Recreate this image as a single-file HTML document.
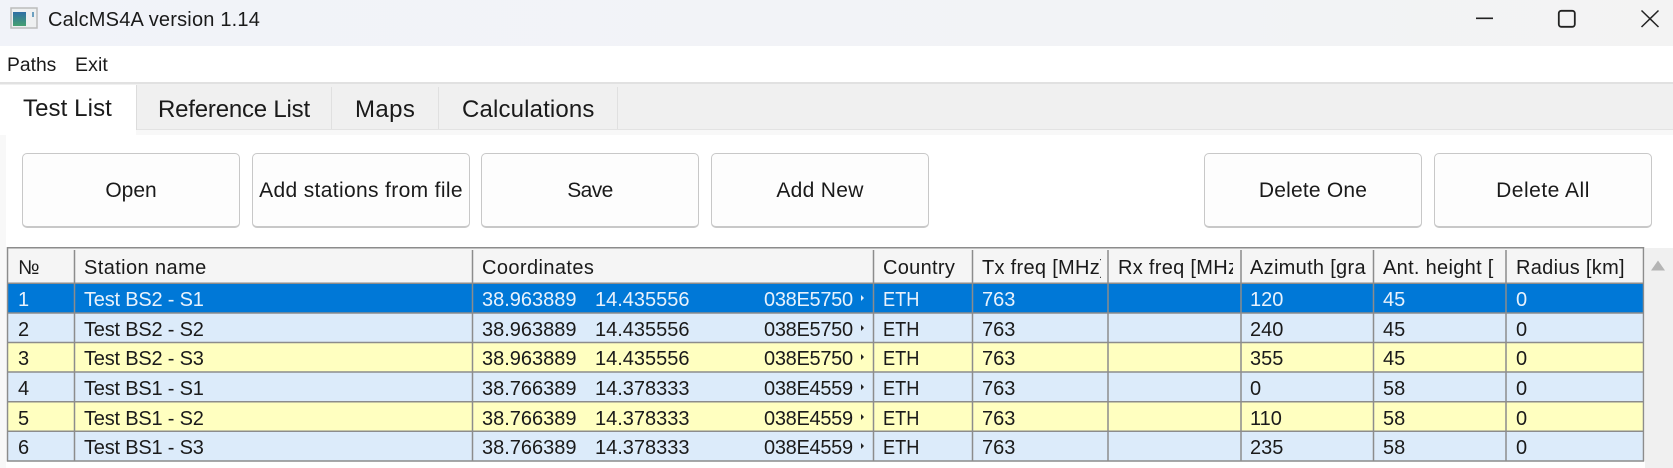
<!DOCTYPE html>
<html><head><meta charset="utf-8"><style>
html,body{margin:0;padding:0}
body{width:1673px;height:468px;overflow:hidden;background:#fff;position:relative;font-family:"Liberation Sans",sans-serif;color:#1a1a1a}
.a{position:absolute}
.t{position:absolute;white-space:nowrap;overflow:hidden;font-size:20px;line-height:32px;height:32px}
.h{letter-spacing:.4px}
.n{letter-spacing:-.2px}
.c{letter-spacing:-.3px}
.e{transform:scaleX(.91);transform-origin:0 0}
.btn{position:absolute;top:153px;height:72px;width:216px;border:1px solid #c8c8c8;border-bottom:2px solid #c8c8c8;border-radius:5px;background:#fdfdfd;text-align:center;font-size:21px;line-height:74px;white-space:nowrap;letter-spacing:.2px}
.w{color:#e8f2fc}
.r{position:absolute;left:861px;border-left:3.500px solid #222;border-top:3.500px solid transparent;border-bottom:3.500px solid transparent}
</style></head><body>
<div class="a" style="left:0;top:0;width:1673px;height:46px;background:linear-gradient(90deg,#f1f3f9,#f2f3f6 70%,#f3f3f3)"></div>
<svg class="a" style="left:10px;top:7px" width="28" height="23" viewBox="0 0 28 23">
<rect x="1" y="1" width="26" height="20" fill="#eef0f1" stroke="#bcbcbc" stroke-width="1.500"/>
<defs><linearGradient id="g" x1="0" y1="0" x2="0" y2="1"><stop offset="0" stop-color="#2f6fa5"/><stop offset="1" stop-color="#45a070"/></linearGradient></defs>
<rect x="3" y="5" width="13" height="14" fill="url(#g)"/><rect x="22" y="5" width="2" height="5" fill="#6ca0c0"/>
</svg>
<div class="a" style="left:48px;top:6px;font-size:20px;line-height:28px;white-space:nowrap;letter-spacing:.2px">CalcMS4A version 1.14</div>
<svg class="a" style="left:1460px;top:4px" width="213" height="36" viewBox="0 0 213 36" fill="none" stroke="#222">
<path d="M16 14.300H33" stroke-width="1.600"/>
<rect x="98.800" y="6.800" width="16" height="16" rx="2.500" stroke-width="1.800"/>
<path d="M181.500 6.500L198.500 23M198.500 6.500L181.500 23" stroke-width="1.500"/>
</svg>
<div class="a" style="left:7px;top:52px;font-size:19.300px;line-height:28px">Paths</div>
<div class="a" style="left:75px;top:51px;font-size:19.500px;line-height:28px;letter-spacing:.1px">Exit</div>
<div class="a" style="left:0;top:82px;width:1673px;height:2px;background:#e1e1e1"></div>
<div class="a" style="left:0;top:84px;width:1673px;height:45px;background:#f0f0f0"></div>
<div class="a" style="left:0;top:129px;width:1673px;height:1px;background:#e3e3e3"></div>
<div class="a" style="left:0;top:130px;width:1673px;height:5px;background:#f8f8f8"></div>
<div class="a" style="left:0;top:135px;width:6px;height:333px;background:#f8f8f8"></div>
<div class="a" style="left:0;top:85px;width:136px;height:50px;background:#fff"></div>
<div class="a" style="left:136px;top:85px;width:1px;height:45px;background:#dcdcdc"></div>
<div class="a" style="left:331px;top:87px;width:1px;height:42px;background:#e0e0e0"></div>
<div class="a" style="left:438px;top:87px;width:1px;height:42px;background:#e0e0e0"></div>
<div class="a" style="left:617px;top:87px;width:1px;height:42px;background:#e0e0e0"></div>
<div class="a" style="left:23px;top:93px;font-size:24px;line-height:32px;white-space:nowrap;letter-spacing:.1px">Test List</div>
<div class="a" style="left:158px;top:94px;font-size:24px;line-height:32px;white-space:nowrap;letter-spacing:-.2px">Reference List</div>
<div class="a" style="left:355px;top:94px;font-size:24px;line-height:32px;white-space:nowrap;letter-spacing:.4px">Maps</div>
<div class="a" style="left:462px;top:94px;font-size:24px;line-height:32px;white-space:nowrap;letter-spacing:.15px">Calculations</div>

<div class="btn" style="left:22px;letter-spacing:0">Open</div>
<div class="btn" style="left:252px;letter-spacing:.35px">Add stations from file</div>
<div class="btn" style="left:481px;letter-spacing:-.6px">Save</div>
<div class="btn" style="left:711px;letter-spacing:.3px">Add New</div>
<div class="btn" style="left:1204px">Delete One</div>
<div class="btn" style="left:1434px;letter-spacing:.5px">Delete All</div>

<div class="a" style="left:1645px;top:248px;width:28px;height:220px;background:#f0f0f0"></div>
<svg class="a" style="left:0;top:240px" width="1673" height="228" viewBox="0 240 1673 228">
<rect x="7" y="248" width="1637" height="35" fill="#f5f5f5"/>
<rect x="7" y="283" width="1637" height="30" fill="#0078d7"/>
<rect x="7" y="313" width="1637" height="29.500" fill="#dcebfa"/>
<rect x="7" y="342.500" width="1637" height="29.500" fill="#ffffc0"/>
<rect x="7" y="372" width="1637" height="29.500" fill="#dcebfa"/>
<rect x="7" y="401.500" width="1637" height="30" fill="#ffffc0"/>
<rect x="7" y="431.500" width="1637" height="29.500" fill="#dcebfa"/>
<g stroke="#8c8c8c" stroke-width="1.500" fill="none">
<path d="M7 247.800H1644M7.500 247V461.500M1643.500 247V461.500M7 461H1644"/>
<path d="M7 283.300H1644M7 313H1644M7 342.500H1644M7 372H1644M7 401.700H1644M7 431.300H1644"/>
<path d="M74.500 250V461M472.500 250V461M873.500 250V461M972.500 250V461M1108 250V461M1241 250V461M1373.500 250V461M1506 250V461"/>
</g>
<path d="M1651 270.500L1658 260.500L1665 270.500Z" fill="#b4b4b4"/>
</svg>

<!-- header -->
<div class="t" style="left:18px;top:252px">№</div>
<div class="t h" style="left:84px;top:252px">Station name</div>
<div class="t h" style="left:482px;top:252px">Coordinates</div>
<div class="t h" style="left:883px;top:252px;letter-spacing:.3px">Country</div>
<div class="t h" style="left:982px;top:252px;width:119px;letter-spacing:.3px">Tx freq [MHz]</div>
<div class="t h" style="left:1118px;top:252px;width:115px;letter-spacing:.3px">Rx freq [MHz]</div>
<div class="t h" style="left:1250px;top:252px;width:115.500px;letter-spacing:.3px">Azimuth [grad]</div>
<div class="t h" style="left:1383px;top:252px;width:112px;letter-spacing:.3px">Ant. height [m]</div>
<div class="t h" style="left:1516px;top:252px;letter-spacing:.3px">Radius [km]</div>

<!-- row 1 -->
<div class="t w" style="left:18px;top:284px">1</div><div class="t w n" style="left:84px;top:284px">Test BS2 - S1</div><div class="t w" style="left:482px;top:284px">38.963889</div><div class="t w" style="left:595px;top:284px">14.435556</div><div class="t w c" style="left:764px;top:284px">038E5750</div><div class="r" style="top:295px;border-left-color:#e8f2fc"></div><div class="t w e" style="left:883px;top:284px">ETH</div><div class="t w" style="left:982px;top:284px">763</div><div class="t w" style="left:1250px;top:284px">120</div><div class="t w" style="left:1383px;top:284px">45</div><div class="t w" style="left:1516px;top:284px">0</div>
<!-- row 2 -->
<div class="t" style="left:18px;top:314px">2</div><div class="t n" style="left:84px;top:314px">Test BS2 - S2</div><div class="t" style="left:482px;top:314px">38.963889</div><div class="t" style="left:595px;top:314px">14.435556</div><div class="t c" style="left:764px;top:314px">038E5750</div><div class="r" style="top:325px"></div><div class="t e" style="left:883px;top:314px">ETH</div><div class="t" style="left:982px;top:314px">763</div><div class="t" style="left:1250px;top:314px">240</div><div class="t" style="left:1383px;top:314px">45</div><div class="t" style="left:1516px;top:314px">0</div>
<!-- row 3 -->
<div class="t" style="left:18px;top:343px">3</div><div class="t n" style="left:84px;top:343px">Test BS2 - S3</div><div class="t" style="left:482px;top:343px">38.963889</div><div class="t" style="left:595px;top:343px">14.435556</div><div class="t c" style="left:764px;top:343px">038E5750</div><div class="r" style="top:354px"></div><div class="t e" style="left:883px;top:343px">ETH</div><div class="t" style="left:982px;top:343px">763</div><div class="t" style="left:1250px;top:343px">355</div><div class="t" style="left:1383px;top:343px">45</div><div class="t" style="left:1516px;top:343px">0</div>
<!-- row 4 -->
<div class="t" style="left:18px;top:373px">4</div><div class="t n" style="left:84px;top:373px">Test BS1 - S1</div><div class="t" style="left:482px;top:373px">38.766389</div><div class="t" style="left:595px;top:373px">14.378333</div><div class="t c" style="left:764px;top:373px">038E4559</div><div class="r" style="top:384px"></div><div class="t e" style="left:883px;top:373px">ETH</div><div class="t" style="left:982px;top:373px">763</div><div class="t" style="left:1250px;top:373px">0</div><div class="t" style="left:1383px;top:373px">58</div><div class="t" style="left:1516px;top:373px">0</div>
<!-- row 5 -->
<div class="t" style="left:18px;top:403px">5</div><div class="t n" style="left:84px;top:403px">Test BS1 - S2</div><div class="t" style="left:482px;top:403px">38.766389</div><div class="t" style="left:595px;top:403px">14.378333</div><div class="t c" style="left:764px;top:403px">038E4559</div><div class="r" style="top:414px"></div><div class="t e" style="left:883px;top:403px">ETH</div><div class="t" style="left:982px;top:403px">763</div><div class="t" style="left:1250px;top:403px">110</div><div class="t" style="left:1383px;top:403px">58</div><div class="t" style="left:1516px;top:403px">0</div>
<!-- row 6 -->
<div class="t" style="left:18px;top:432px">6</div><div class="t n" style="left:84px;top:432px">Test BS1 - S3</div><div class="t" style="left:482px;top:432px">38.766389</div><div class="t" style="left:595px;top:432px">14.378333</div><div class="t c" style="left:764px;top:432px">038E4559</div><div class="r" style="top:443px"></div><div class="t e" style="left:883px;top:432px">ETH</div><div class="t" style="left:982px;top:432px">763</div><div class="t" style="left:1250px;top:432px">235</div><div class="t" style="left:1383px;top:432px">58</div><div class="t" style="left:1516px;top:432px">0</div>
</body></html>
